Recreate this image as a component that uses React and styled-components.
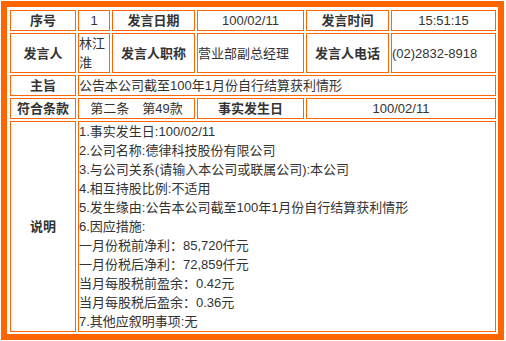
import styled, { createGlobalStyle } from 'styled-components'

const GlobalStyle = createGlobalStyle`
  body {
    margin: 0;
    background: #fff;
    font-family: "Liberation Sans", "Noto Sans CJK SC", Arial, sans-serif;
    font-size: 13px;
    color: #333;
  }
`

const Frame = styled.div`
  margin: 1px 0 0 1px;
  width: 503px;
  box-sizing: border-box;
  border: 6px solid #ff6600;
  padding: 3px 2px 2px 3px;
`

const Grid = styled.div`
  display: grid;
  grid-template-columns: 66px 32px 83px 107px 83px 105px;
  gap: 2px;
`

const Cell = styled.div`
  box-sizing: border-box;
  border: 1px solid #ff6600;
  display: flex;
  align-items: center;
  justify-content: ${props => props.align === 'left' ? 'flex-start' : 'center'};
  text-align: ${props => props.align === 'left' ? 'left' : 'center'};
  grid-column: span ${props => props.span || 1};
  line-height: 19px;
  padding: 0;
  font-weight: ${props => props.head ? 'bold' : 'normal'};
  color: #333;
  overflow: hidden;
`

const Lines = styled.div`
  display: flex;
  flex-direction: column;
  white-space: nowrap;
`

const notes = [
  '1.事实发生日:100/02/11',
  '2.公司名称:德律科技股份有限公司',
  '3.与公司关系(请输入本公司或联属公司):本公司',
  '4.相互持股比例:不适用',
  '5.发生缘由:公告本公司截至100年1月份自行结算获利情形',
  '6.因应措施:',
  '一月份税前净利：85,720仟元',
  '一月份税后净利：72,859仟元',
  '当月每股税前盈余：0.42元',
  '当月每股税后盈余：0.36元',
  '7.其他应叙明事项:无',
]

const App = () => {
  return (
    <>
      <GlobalStyle />
      <Frame>
        <Grid>
          <Cell head>序号</Cell>
          <Cell>1</Cell>
          <Cell head>发言日期</Cell>
          <Cell>100/02/11</Cell>
          <Cell head>发言时间</Cell>
          <Cell>15:51:15</Cell>

          <Cell head>发言人</Cell>
          <Cell align="left">林江淮</Cell>
          <Cell head>发言人职称</Cell>
          <Cell align="left">营业部副总经理</Cell>
          <Cell head>发言人电话</Cell>
          <Cell align="left">(02)2832-8918</Cell>

          <Cell head>主旨</Cell>
          <Cell span={5} align="left">公告本公司截至100年1月份自行结算获利情形</Cell>

          <Cell head>符合条款</Cell>
          <Cell span={2}>第二条　第49款</Cell>
          <Cell head>事实发生日</Cell>
          <Cell span={2}>100/02/11</Cell>

          <Cell head>说明</Cell>
          <Cell span={5} align="left">
            <Lines>
              {notes.map((line, i) => (
                <span key={i}>{line}</span>
              ))}
            </Lines>
          </Cell>
        </Grid>
      </Frame>
    </>
  )
}

export default App
